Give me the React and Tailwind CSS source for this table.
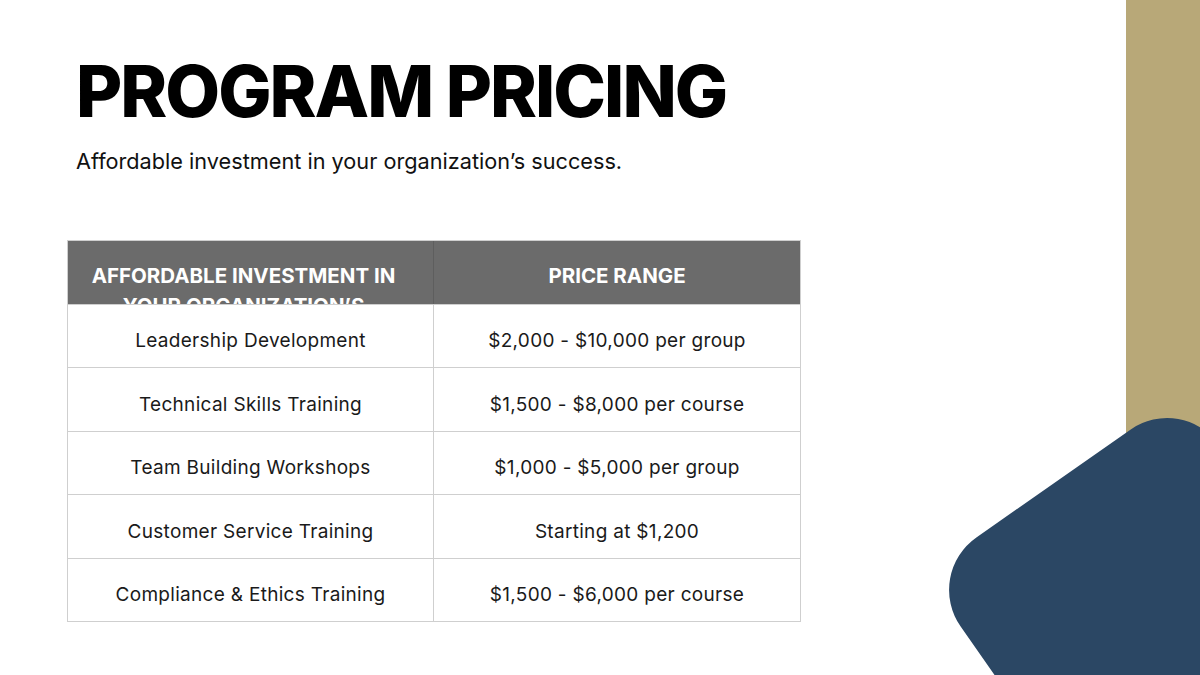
export default function App() {
  const rows = [
    ["Leadership Development", "$2,000 - $10,000 per group"],
    ["Technical Skills Training", "$1,500 - $8,000 per course"],
    ["Team Building Workshops", "$1,000 - $5,000 per group"],
    ["Customer Service Training", "Starting at $1,200"],
    ["Compliance & Ethics Training", "$1,500 - $6,000 per course"],
  ];
  return (
    <div
      className="relative w-[1200px] h-[675px] overflow-hidden bg-white"
      style={{ fontFamily: "Inter, 'Noto Sans', sans-serif" }}
    >
      <div className="absolute right-0 top-0 w-[74px] h-full bg-[#b8a878]" />
      <div className="absolute left-[986px] top-[455px] w-[316px] h-[316px] rounded-[64px] bg-[#2b4764] rotate-[-35deg]" />

      <div className="relative pt-[55px] pl-[76px]">
        <h1 className="text-[71px] leading-[72px] font-extrabold text-black tracking-[-2px]">
          PROGRAM PRICING
        </h1>
        <p className="mt-[20px] text-[21.7px] leading-[28px] text-[#111]">
          Affordable investment in your organization’s success.
        </p>

        <div className="ml-[-9px] mt-[65px] w-[734px] border border-[#cfcfcf]">
          <div className="grid grid-cols-2 h-[63px] bg-[#6b6b6b] text-white font-bold text-[20.5px] leading-[30px] uppercase">
            <div className="overflow-hidden border-r border-[#5e5e5e] pl-[16px] pr-[30px] pt-[20px] text-center">
              Affordable investment in your organization’s success.
            </div>
            <div className="overflow-hidden px-[20px] pt-[20px] text-center">
              Price Range
            </div>
          </div>
          {rows.map(([a, b], i) => (
            <div
              key={i}
              className="grid grid-cols-2 h-[63.4px] border-t border-[#cfcfcf] text-[19px] tracking-[0.3px] text-[#1a1a1a]"
            >
              <div className="flex items-center justify-center pt-[11px] border-r border-[#cfcfcf]">
                {a}
              </div>
              <div className="flex items-center justify-center pt-[11px]">{b}</div>
            </div>
          ))}
        </div>
      </div>
    </div>
  );
}
